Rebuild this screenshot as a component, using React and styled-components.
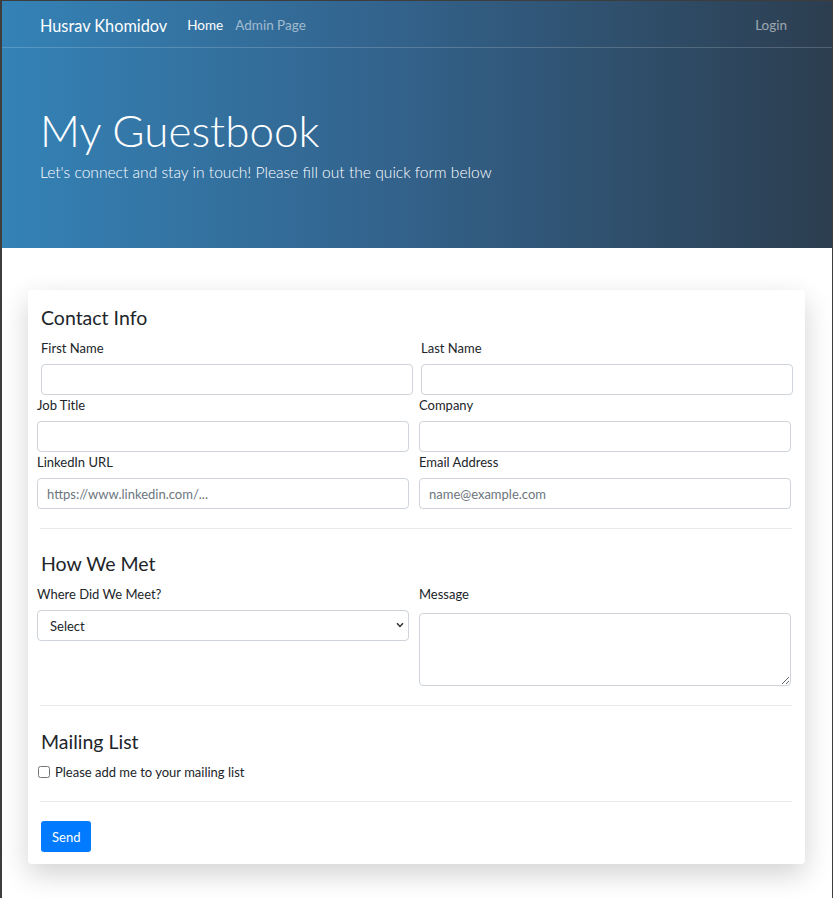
import React from 'react'
import styled, { createGlobalStyle } from 'styled-components'

const GlobalStyle = createGlobalStyle`
  * { box-sizing: border-box; }
  body {
    margin: 0;
    font-family: Lato, "Open Sans", sans-serif;
    font-size: 14px;
    color: #212529;
    background: #fff;
  }
`

const Frame = styled.div`
  min-height: 898px;
  border-top: 1px solid #3d3d3d;
  border-left: 2px solid #3d3d3d;
  border-right: 1px solid #3d3d3d;
  background: #fff;
  padding-bottom: 35px;
`

const Header = styled.header`
  background: linear-gradient(to right, #3482b6 0%, #33648e 45%, #2c3e50 100%);
  color: #fff;
`

const Nav = styled.nav`
  height: 47px;
  display: flex;
  align-items: center;
  padding: 2px 45px 0 38px;
  border-bottom: 1px solid rgba(255, 255, 255, 0.18);
`

const Brand = styled.a`
  font-size: 16.3px;
  color: #fff;
  margin-right: 20px;
`

const NavLink = styled.a`
  font-size: 13.5px;
  color: ${p => (p.active ? '#fff' : 'rgba(255,255,255,0.55)')};
  margin-right: ${p => (p.push ? 'auto' : p.last ? '0' : '12px')};
`

const Hero = styled.div`
  height: 200px;
  padding: 58px 38px 0;
`

const Title = styled.h1`
  margin: 0;
  font-weight: 300;
  font-size: 44px;
  line-height: 48px;
`

const Lead = styled.p`
  margin: 9px 0 0;
  font-weight: 300;
  font-size: 15.6px;
  color: #fff;
`

const Card = styled.form`
  margin: 42px 27px 0 26px;
  background: #fff;
  border-radius: 4px;
  box-shadow: 0 10px 28px rgba(0, 0, 0, 0.18);
  padding: 16px 12px 12px 9px;
`

const Heading = styled.h2`
  margin: 0 0 8px 4px;
  font-size: 19.5px;
  font-weight: 400;
  line-height: 24px;
  color: #212529;
`

const Row = styled.div`
  display: grid;
  grid-template-columns: 372px 372px;
  column-gap: ${p => (p.tight ? '8px' : '10px')};
  padding-left: ${p => (p.inset ? '4px' : '0')};
`

const Field = styled.div`
  display: flex;
  flex-direction: column;
`

const Label = styled.label`
  font-size: 13px;
  line-height: 20px;
  margin-bottom: ${p => p.gap || 6}px;
  color: #212529;
`

const Input = styled.input`
  height: 31px;
  width: 100%;
  border: 1px solid #ced4da;
  border-radius: 4px;
  padding: 0 9px;
  font: inherit;
  font-size: 13px;
  color: #495057;
  &::placeholder { color: #6c757d; }
`

const SelectWrap = styled.div`
  position: relative;
`

const Select = styled.select`
  appearance: none;
  height: 31px;
  width: 100%;
  border: 1px solid #ced4da;
  border-radius: 4px;
  padding: 0 12px;
  font: inherit;
  font-size: 13px;
  color: #212529;
  background: #fff;
`

const Chevron = styled.svg`
  position: absolute;
  right: 5px;
  top: 12px;
  pointer-events: none;
`

const TextArea = styled.textarea`
  height: 73px;
  width: 100%;
  border: 1px solid #ced4da;
  border-radius: 4px;
  font: inherit;
`

const Divider = styled.hr`
  margin: ${p => p.top}px 0 ${p => p.bottom}px 3px;
  width: 752px;
  border: 0;
  border-top: 1px solid #e9ecef;
`

const CheckRow = styled.label`
  display: flex;
  align-items: center;
  gap: 5px;
  height: 20px;
  font-size: 13px;
  input { margin: 0 0 0 1px; width: 12px; height: 12px; }
`

const Button = styled.button`
  margin-left: 4px;
  height: 31px;
  padding: 0 11px;
  border: 0;
  border-radius: 3px;
  background: #007bff;
  color: #fff;
  font: inherit;
  font-size: 13px;
`

export default function App() {
  return (
    <Frame>
      <GlobalStyle />
      <Header>
        <Nav>
          <Brand>Husrav Khomidov</Brand>
          <NavLink active>Home</NavLink>
          <NavLink push>Admin Page</NavLink>
          <NavLink last>Login</NavLink>
        </Nav>
        <Hero>
          <Title>My Guestbook</Title>
          <Lead>Let's connect and stay in touch! Please fill out the quick form below</Lead>
        </Hero>
      </Header>

      <Card onSubmit={e => e.preventDefault()}>
        <Heading>Contact Info</Heading>
        <Row inset tight>
          <Field>
            <Label>First Name</Label>
            <Input />
          </Field>
          <Field>
            <Label>Last Name</Label>
            <Input />
          </Field>
        </Row>
        <Row>
          <Field>
            <Label>Job Title</Label>
            <Input />
          </Field>
          <Field>
            <Label>Company</Label>
            <Input />
          </Field>
        </Row>
        <Row>
          <Field>
            <Label>LinkedIn URL</Label>
            <Input placeholder="https://www.linkedin.com/..." />
          </Field>
          <Field>
            <Label>Email Address</Label>
            <Input placeholder="name@example.com" />
          </Field>
        </Row>

        <Divider top={19} bottom={23} />
        <Heading>How We Met</Heading>
        <Row>
          <Field>
            <Label>Where Did We Meet?</Label>
            <SelectWrap>
              <Select defaultValue="">
                <option value="">Select</option>
                <option>Conference</option>
                <option>Work</option>
                <option>Online</option>
              </Select>
              <Chevron width="8" height="6" viewBox="0 0 8 6">
                <path d="M1 1.2 L4 4.4 L7 1.2" fill="none" stroke="#333" strokeWidth="1.5" />
              </Chevron>
            </SelectWrap>
          </Field>
          <Field>
            <Label gap={9}>Message</Label>
            <TextArea />
          </Field>
        </Row>

        <Divider top={19} bottom={24} />
        <Heading>Mailing List</Heading>
        <CheckRow>
          <input type="checkbox" />
          Please add me to your mailing list
        </CheckRow>

        <Divider top={19} bottom={19} />
        <Button type="submit">Send</Button>
      </Card>
    </Frame>
  )
}
